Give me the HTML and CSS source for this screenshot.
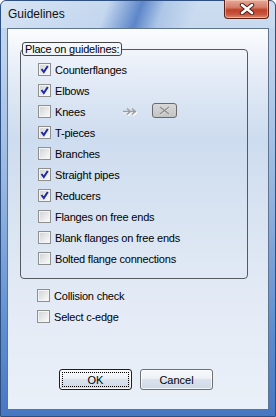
FILE: index.html
```html
<!DOCTYPE html>
<html lang="en">
<head>
  <meta charset="UTF-8" />
  <title>Guidelines</title>
  <link rel="stylesheet" href="styles.css">
</head>
<body>

  <div class="window">
    <div class="titlebar">
      <span class="title">Guidelines</span>
      <div class="close">
        <svg width="16" height="12" viewBox="0 0 16 12">
          <path d="M3 2 L13 10 M13 2 L3 10" stroke="#4a1a14" stroke-width="4.4" stroke-linecap="round" />
          <path d="M3 2 L13 10 M13 2 L3 10" stroke="#ffffff" stroke-width="2.6" stroke-linecap="round" />
        </svg>
      </div>
    </div>

    <div class="client">
      <fieldset class="group">
        <legend>Place on guidelines:</legend>

        <div class="check on"><span class="box"></span><span>Counterflanges</span></div>
        <div class="check on"><span class="box"></span><span>Elbows</span></div>
        <div class="check">
          <span class="box"></span><span class="knees">Knees</span>
          <svg class="arrows" width="17" height="8" viewBox="0 0 17 8">
            <path d="M0 4.5 H14 M5 1 L8.5 4.5 L5 8 M10 1 L13.5 4.5 L10 8" stroke="#ffffff" stroke-width="1.4" fill="none" />
            <path d="M0 3.5 H13 M4 0.5 L7.5 3.5 L4 6.5 M9 0.5 L12.5 3.5 L9 6.5" stroke="#9a9ea4" stroke-width="1.4" fill="none" />
          </svg>
          <span class="minibtn">
            <svg width="13" height="9" viewBox="0 0 13 9">
              <path d="M2 1 L6.5 4.5 L2 8 M11 1 L6.5 4.5 L11 8" stroke="#e6e6e6" stroke-width="1.2" fill="none" transform="translate(0.6 0.6)" />
              <path d="M2 1 L6.5 4.5 L2 8 M11 1 L6.5 4.5 L11 8" stroke="#8c8c8c" stroke-width="1.2" fill="none" />
            </svg>
          </span>
        </div>
        <div class="check on"><span class="box"></span><span>T-pieces</span></div>
        <div class="check"><span class="box"></span><span>Branches</span></div>
        <div class="check on"><span class="box"></span><span>Straight pipes</span></div>
        <div class="check on"><span class="box"></span><span>Reducers</span></div>
        <div class="check"><span class="box"></span><span>Flanges on free ends</span></div>
        <div class="check"><span class="box"></span><span>Blank flanges on free ends</span></div>
        <div class="check"><span class="box"></span><span>Bolted flange connections</span></div>
      </fieldset>

      <div class="options">
        <div class="check"><span class="box"></span><span>Collision check</span></div>
        <div class="check"><span class="box"></span><span>Select c-edge</span></div>
      </div>

      <div class="buttons">
        <button class="btn default"><span>OK</span></button>
        <button class="btn">Cancel</button>
      </div>
    </div>
  </div>

</body>
</html>
```

FILE: styles.css
```css
* {
  box-sizing: border-box;
}

body {
  margin: 0;
  font-family: "Liberation Sans", Arial, sans-serif;
  font-size: 11px;
  letter-spacing: -0.2px;
  color: #000;
}

.window {
  width: 276px;
  height: 417px;
  border: 1px solid #2d4f82;
  border-radius: 6px 6px 0 0;
  background: linear-gradient(to bottom, #c6d9ef 0, #bcd1ec 60px, #96b6e0 45%, #5d8dd0 80%, #4877c2 100%);
}

.titlebar {
  height: 27px;
  display: flex;
  align-items: flex-start;
  border-radius: 5px 5px 0 0;
  background: linear-gradient(110deg, rgba(255,255,255,0.3) 0, rgba(255,255,255,0) 38%, rgba(50,100,185,0.7) 50%, rgba(120,160,215,0.3) 58%, rgba(255,255,255,0.1) 70%);
}

.title {
  font-size: 12px;
  letter-spacing: 0;
  margin: 6px 0 0 7px;
  color: #111;
}

.close {
  margin-left: auto;
  margin-right: 6px;
  width: 45px;
  height: 19px;
  margin-top: -1px;
  border: 1px solid #5a2118;
  border-top: none;
  border-radius: 0 0 4px 4px;
  background: linear-gradient(to bottom, #e6a898 0, #d4806b 40%, #c0412a 55%, #c8563f 80%, #e08b6e 100%);
  box-shadow: inset 0 0 0 1px rgba(255,220,200,0.5);
  display: flex;
  align-items: center;
  justify-content: center;
}

.client {
  height: 382px;
  margin: 0 6px 6px;
  border: 1px solid #5f7490;
  background: linear-gradient(to bottom, #fbfcfe 0, #e3ebf6 50px, #cddcef 110px, #d9e4f2 190px, #e4ebf6 280px, #eaf0f8 100%);
  padding-top: 13px;
}

.group {
  margin: 0 20px 0 12px;
  padding: 0 0 9px 1px;
  border: 1px solid #555a60;
  border-radius: 4px;
}

.group legend {
  padding: 0 2px;
  height: 14px;
  line-height: 12px;
  border: 1px solid #444;
  border-radius: 3px;
  margin-bottom: 3px;
}

.check {
  height: 21px;
  display: flex;
  align-items: center;
  padding-left: 16px;
}

.options .check {
  padding-left: 29px;
}

.box {
  width: 13px;
  height: 13px;
  margin-right: 4px;
  border: 1px solid #8e8f8f;
  background: linear-gradient(135deg, #cfd1d4 0, #e6e7e8 50%, #fdfdfd 100%);
  box-shadow: inset 0 0 0 1px #f4f4f4;
  flex: none;
}

.check.on .box {
  background-image: url("data:image/svg+xml,%3Csvg xmlns='http://www.w3.org/2000/svg' width='11' height='11'%3E%3Cpath d='M2.5 5 L4.8 8 L8.8 2' stroke='%231f2a9c' stroke-width='2' fill='none'/%3E%3C/svg%3E"), linear-gradient(135deg, #cfd1d4 0, #e6e7e8 50%, #fdfdfd 100%);
}

.knees {
  width: 68px;
}

.arrows {
  margin-top: 1px;
}

.minibtn {
  margin-left: 12px;
  margin-top: -2px;
  width: 25px;
  height: 15px;
  border: 1px solid #6a6a6a;
  border-radius: 3px;
  background: linear-gradient(to bottom, #d8d8d8, #c4c4c4);
  display: flex;
  align-items: center;
  justify-content: center;
}

.options {
  margin-top: 6px;
}

.buttons {
  display: flex;
  gap: 8px;
  padding-left: 51px;
  margin-top: 42px;
}

.btn {
  width: 73px;
  height: 21px;
  padding: 0;
  font-family: inherit;
  font-size: 11px;
  color: #000;
  border: 1px solid #707070;
  border-radius: 3px;
  background: linear-gradient(to bottom, #f6f8fb 0, #edf1f6 45%, #dae2ed 50%, #cfd9e7 100%);
  box-shadow: inset 0 0 0 1px rgba(255,255,255,0.7);
}

.btn.default {
  border-color: #1e1e1e;
  padding: 2px;
}

.btn.default span {
  display: flex;
  align-items: center;
  justify-content: center;
  height: 100%;
  border: 1px dotted #000;
}
```
